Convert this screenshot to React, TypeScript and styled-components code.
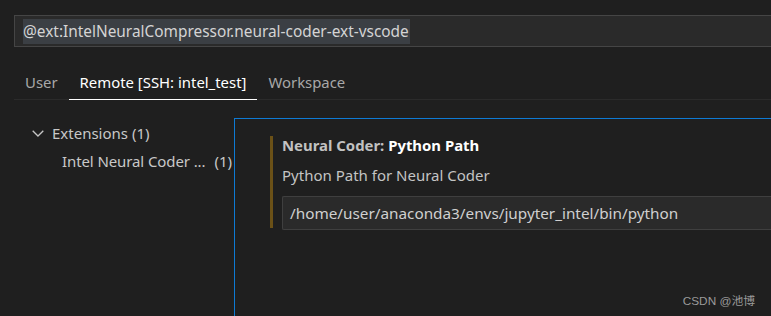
import styled, { createGlobalStyle } from "styled-components";

const GlobalStyle = createGlobalStyle`
  html, body {
    margin: 0;
    padding: 0;
    background: #1f1f1f;
    overflow: hidden;
  }
  body {
    font-family: "Noto Sans", "Open Sans", sans-serif;
    color: #cccccc;
  }
`;

function App() {
  return (
    <Page>
      <GlobalStyle />
      <SearchBox>
        <Query>@ext:IntelNeuralCompressor.neural-coder-ext-vscode</Query>
      </SearchBox>

      <Tabs>
        <Tab>User</Tab>
        <Tab active>Remote [SSH: intel_test]</Tab>
        <Tab>Workspace</Tab>
      </Tabs>

      <Body>
        <Tree>
          <TreeRow depth={0}>
            <Chevron viewBox="0 0 12 7">
              <path d="M0.7 0.7 L6 6 L11.3 0.7" fill="none" stroke="#c5c5c5" strokeWidth="1.3" />
            </Chevron>
            Extensions (1)
          </TreeRow>
          <TreeRow depth={1}>
            <Label>Intel Neural Coder ...</Label>
            <Count>(1)</Count>
          </TreeRow>
        </Tree>

        <SettingsPanel>
          <Setting>
            <Title>
              <Category>Neural Coder: </Category>
              <Name>Python Path</Name>
            </Title>
            <Description>Python Path for Neural Coder</Description>
            <Input>/home/user/anaconda3/envs/jupyter_intel/bin/python</Input>
          </Setting>
        </SettingsPanel>
      </Body>

      <Watermark>CSDN @池博</Watermark>
    </Page>
  );
}

const Page = styled.div`
  position: relative;
  height: 316px;
  padding-left: 14px;
  padding-top: 15px;
  box-sizing: border-box;
`;

const SearchBox = styled.div`
  height: 32px;
  box-sizing: border-box;
  border: 1px solid #454545;
  border-right: none;
  background: #2a2a2a;
  display: flex;
  align-items: center;
  padding-left: 8px;
`;

const Query = styled.span`
  background: #3b3f44;
  color: #d4d4d4;
  font-size: 15.4px;
  line-height: 25px;
  padding-right: 1px;
  white-space: nowrap;
`;

const Tabs = styled.div`
  display: flex;
  margin-top: 18px;
  border-bottom: 1px solid #2b2b2b;
`;

const Tab = styled.div<{ active?: boolean }>`
  padding: 0 11px;
  height: 35px;
  line-height: 34px;
  font-size: 14.9px;
  color: ${(p) => (p.active ? "#ffffff" : "#a8a8a8")};
  border-bottom: 1px solid ${(p) => (p.active ? "#ffffff" : "transparent")};
  margin-bottom: -1px;
  box-sizing: border-box;
  white-space: nowrap;
`;

const Body = styled.div`
  display: flex;
  margin-top: 18px;
  height: 200px;
`;

const Tree = styled.div`
  width: 220px;
  flex: none;
  padding-top: 1px;
`;

const TreeRow = styled.div<{ depth: number }>`
  display: flex;
  align-items: center;
  height: 28px;
  padding-left: ${(p) => (p.depth === 0 ? 18 : 48)}px;
  font-size: 15px;
  color: #c8c8c8;
  white-space: nowrap;
`;

const Chevron = styled.svg`
  width: 12px;
  height: 7px;
  margin-right: 8px;
  margin-top: 1px;
`;

const Label = styled.span`
  letter-spacing: -0.1px;
`;

const Count = styled.span`
  margin-left: 9px;
`;

const SettingsPanel = styled.div`
  flex: 1;
  border-left: 1px solid #0e7ad3;
  border-top: 1px solid #0e7ad3;
  padding: 18px 0 0 35px;
`;

const Setting = styled.div`
  border-left: 3px solid #6b5117;
  padding-left: 9px;
  height: 92px;
`;

const Title = styled.div`
  font-size: 14.9px;
  font-weight: 700;
  line-height: 18px;
  margin-top: -1px;
`;

const Category = styled.span`
  color: #c2c2c2;
  white-space: pre;
`;

const Name = styled.span`
  color: #ffffff;
`;

const Description = styled.div`
  font-size: 15px;
  color: #c4c4c4;
  margin-top: 11px;
  line-height: 20px;
`;

const Input = styled.div`
  margin-top: 11px;
  height: 34px;
  box-sizing: border-box;
  border: 1px solid #3f3f3f;
  border-right: none;
  border-radius: 2px 0 0 2px;
  background: #2a2a2a;
  padding-left: 7px;
  line-height: 33px;
  font-size: 15.3px;
  color: #d0d0d0;
  white-space: nowrap;
`;

const Watermark = styled.div`
  position: absolute;
  right: 16px;
  bottom: 8px;
  font-family: "Liberation Sans", "Noto Sans CJK SC", sans-serif;
  font-size: 11.8px;
  color: #9a9a9a;
`;

export default App;
